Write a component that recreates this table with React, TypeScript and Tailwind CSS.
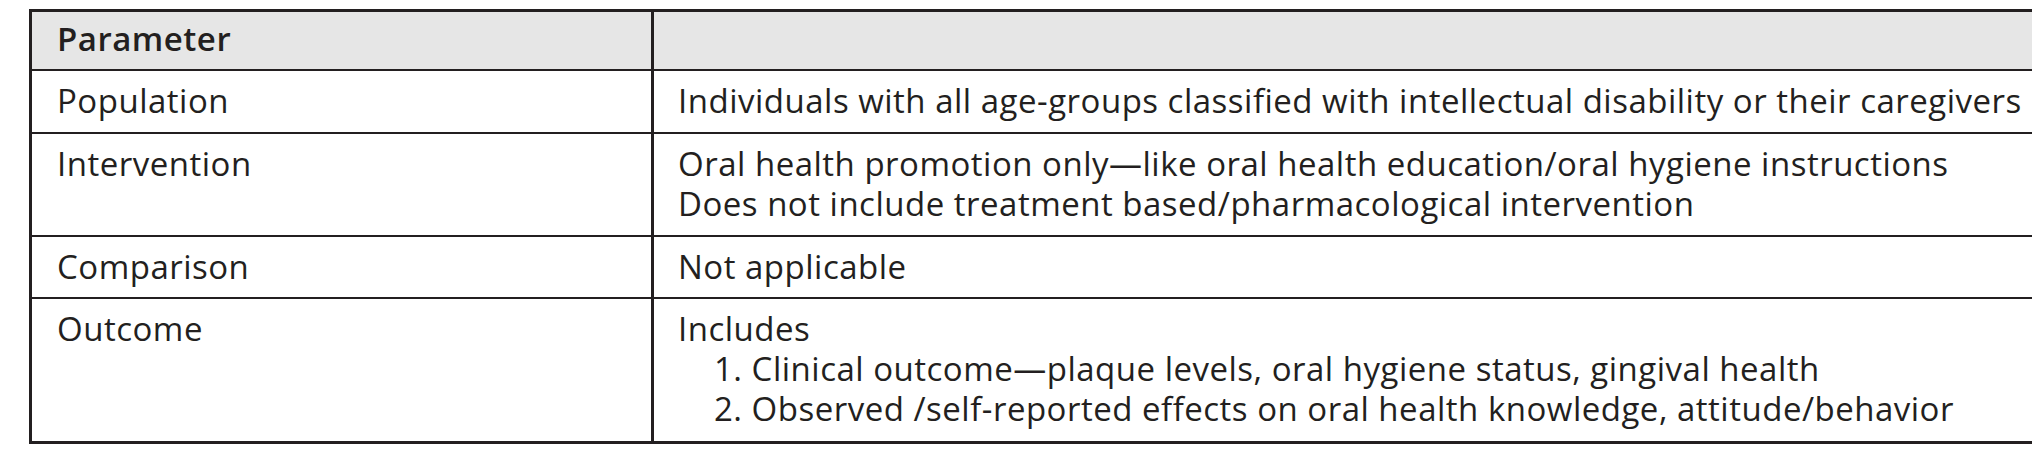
const rows: { label: string; lines: string[]; list?: string[]; h: string }[] = [
  {
    label: "Population",
    lines: ["Individuals with all age-groups classified with intellectual disability or their caregivers"],
    h: "h-[63px]",
  },
  {
    label: "Intervention",
    lines: [
      "Oral health promotion only—like oral health education/oral hygiene instructions",
      "Does not include treatment based/pharmacological intervention",
    ],
    h: "h-[103px]",
  },
  { label: "Comparison", lines: ["Not applicable"], h: "h-[62px]" },
  {
    label: "Outcome",
    lines: ["Includes"],
    list: [
      "1. Clinical outcome—plaque levels, oral hygiene status, gingival health",
      "2. Observed /self-reported effects on oral health knowledge, attitude/behavior",
    ],
    h: "h-[144px]",
  },
];

export default function App() {
  return (
    <div
      className="h-[449px] w-[2032px] overflow-hidden bg-white pl-[29px] pt-[9px] text-[33px] leading-[40px] tracking-[0.5px] text-[#231f20] [font-variant-ligatures:none]"
      style={{ fontFamily: "'Open Sans', 'Noto Sans', sans-serif" }}
    >
      <div className="w-[2100px] border-[3px] border-r-0 border-[#231f20]">
        {/* header */}
        <div className="grid h-[57px] grid-cols-[622px_1fr] bg-[#e6e6e6]">
          <div className="border-r-[3px] border-[#231f20] pl-[25px] pt-[7px] font-semibold">Parameter</div>
          <div />
        </div>
        {rows.map((r) => (
          <div key={r.label} className={`grid grid-cols-[622px_1fr] border-t-2 border-[#231f20] ${r.h}`}>
            <div className="border-r-[3px] border-[#231f20] pl-[25px] pt-[10px]">{r.label}</div>
            <div className="whitespace-nowrap pl-[24px] pt-[10px]">
              {r.lines.map((l) => (
                <div key={l}>{l}</div>
              ))}
              {r.list?.map((l) => (
                <div key={l} className="pl-[36px]">
                  {l}
                </div>
              ))}
            </div>
          </div>
        ))}
      </div>
    </div>
  );
}
